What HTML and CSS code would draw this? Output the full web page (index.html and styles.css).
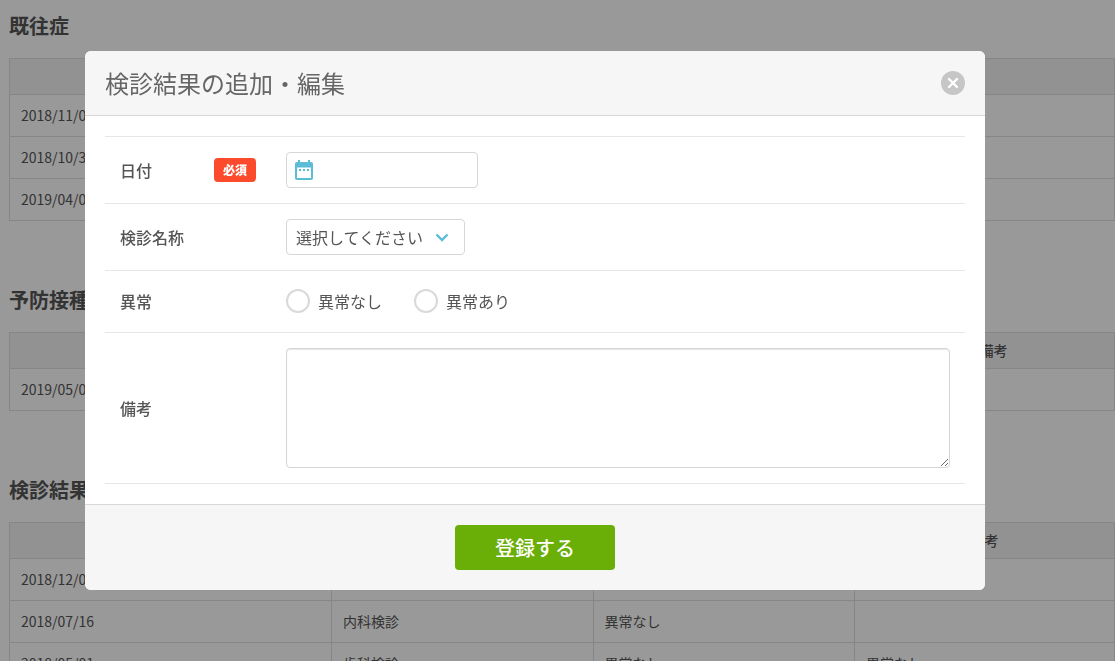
FILE: index.html
```html
<!DOCTYPE html>
<html lang="ja">
<head>
<meta charset="utf-8">
<meta name="viewport" content="width=device-width, initial-scale=1">
<title>検診結果の追加・編集</title>
<link rel="stylesheet" href="styles.css">
</head>
<body>
<main class="page">
  <section class="section">
    <h2 class="section-title">既往症</h2>
    <table class="records">
      <colgroup><col class="col-first"><col></colgroup>
      <thead><tr><th></th><th></th></tr></thead>
      <tbody>
        <tr><td>2018/11/0</td><td></td></tr>
        <tr><td>2018/10/3</td><td></td></tr>
        <tr><td>2019/04/0</td><td></td></tr>
      </tbody>
    </table>
  </section>
  <section class="section">
    <h2 class="section-title">予防接種</h2>
    <table class="records">
      <colgroup><col><col class="col-note"></colgroup>
      <thead><tr><th></th><th>備考</th></tr></thead>
      <tbody>
        <tr><td>2019/05/0</td><td></td></tr>
      </tbody>
    </table>
  </section>
  <section class="section">
    <h2 class="section-title">検診結果</h2>
    <table class="records">
      <colgroup><col class="col-first"><col><col><col class="col-last"></colgroup>
      <thead><tr><th></th><th></th><th></th><th>備考</th></tr></thead>
      <tbody>
        <tr><td>2018/12/0</td><td></td><td></td><td></td></tr>
        <tr><td>2018/07/16</td><td>内科検診</td><td>異常なし</td><td></td></tr>
        <tr><td>2018/05/01</td><td>歯科検診</td><td>異常なし</td><td>異常なし</td></tr>
      </tbody>
    </table>
  </section>
</main>

<div class="overlay">
  <div class="modal" role="dialog" aria-modal="true" aria-labelledby="modal-title">
    <header class="modal-header">
      <h1 class="modal-title" id="modal-title">検診結果の追加・編集</h1>
      <button class="close" type="button" aria-label="閉じる">
        <svg viewBox="0 0 24 24" width="24" height="24" aria-hidden="true"><circle cx="12" cy="12" r="12" fill="#c6c6c6"/><path d="M8 8l8 8M16 8l-8 8" stroke="#fff" stroke-width="2.4" stroke-linecap="round"/></svg>
      </button>
    </header>
    <form id="checkup-form" class="modal-body">
      <div class="row">
        <div class="row-head"><label for="date">日付</label><span class="badge">必須</span></div>
        <div class="date-box">
          <svg class="calendar" viewBox="0 0 18 20" width="18" height="20" aria-hidden="true"><path fill="#5bbcd6" fill-rule="evenodd" d="M3 0h2v2h8V0h2v2h1a2 2 0 0 1 2 2v14a2 2 0 0 1-2 2H2a2 2 0 0 1-2-2V4a2 2 0 0 1 2-2h1zM2 7.500v10.500h14V7.500z"/><path fill="#5bbcd6" d="M4 9h2v2H4zM8 9h2v2H8zM12 9h2v2h-2z"/></svg>
          <input class="date-input" id="date" type="text">
        </div>
      </div>
      <div class="row">
        <div class="row-head"><label for="name">検診名称</label></div>
        <div class="select-box">
          <select class="select" id="name"><option>選択してください</option></select>
          <svg class="chevron" viewBox="0 0 14 9" width="14" height="9" aria-hidden="true"><path d="M1.500 1.500L7 7l5.500-5.500" fill="none" stroke="#5bbcd6" stroke-width="2.400"/></svg>
        </div>
      </div>
      <div class="row row-radio">
        <div class="row-head" id="abnormal">異常</div>
        <div class="radios" role="radiogroup" aria-labelledby="abnormal">
          <label class="radio-label"><input class="radio" type="radio" name="abnormal">異常なし</label>
          <label class="radio-label"><input class="radio" type="radio" name="abnormal">異常あり</label>
        </div>
      </div>
      <div class="row">
        <div class="row-head"><label for="note">備考</label></div>
        <textarea class="textarea" id="note"></textarea>
      </div>
    </form>
    <footer class="modal-footer">
      <button class="submit" type="submit" form="checkup-form">登録する</button>
    </footer>
  </div>
</div>
</body>
</html>
```

FILE: styles.css
```css
* {
  box-sizing: border-box;
}

body {
  margin: 0;
  height: 100vh;
  overflow: hidden;
  background: #fff;
  color: #555;
  font-family: "Noto Sans CJK JP", sans-serif;
  font-size: 16px;
}

button,
input,
select,
textarea {
  font: inherit;
  color: inherit;
}

.page {
  padding: 11px 0 0 9px;
}

.section {
  margin-bottom: 64px;
}

.section-title {
  margin: 0 0 17px;
  font-size: 20px;
  line-height: 30px;
  font-weight: 700;
}

.records {
  width: 100%;
  table-layout: fixed;
  border-collapse: collapse;
  font-size: 14px;
  line-height: 21px;
}

.col-first {
  width: 322px;
}

.col-note {
  width: 242px;
}

.col-last {
  width: 260px;
}

.records th,
.records td {
  height: 42px;
  padding: 0 11px;
  border: 1px solid #e0e0e0;
  text-align: left;
}

.records th {
  height: 36px;
  background: #f3f3f3;
  text-align: center;
  font-weight: 500;
}

.section:not(:last-child) .records th + th,
.section:not(:last-child) .records td + td {
  border-left: 0;
}

.overlay {
  position: fixed;
  inset: 0;
  padding: 51px 130px 0 85px;
  background: rgba(0, 0, 0, 0.4);
}

.modal {
  max-width: 900px;
  overflow: hidden;
  border-radius: 6px;
  background: #fff;
}

.modal-header {
  display: flex;
  align-items: center;
  justify-content: space-between;
  padding: 14px 20px;
  border-bottom: 1px solid #d8d8d8;
  background: #f6f6f6;
}

.modal-title {
  margin: 0;
  color: #666;
  font-size: 24px;
  line-height: 36px;
  font-weight: 400;
}

.close {
  display: block;
  padding: 0;
  border: 0;
  background: none;
  line-height: 0;
}

.modal-body {
  padding: 20px;
}

.row {
  display: grid;
  grid-template-columns: 136px 1fr;
  column-gap: 30px;
  align-items: center;
  padding: 15px;
  border-top: 1px solid #e6e6e6;
}

.row:last-child {
  border-bottom: 1px solid #e6e6e6;
}

.row-radio {
  min-height: 62px;
  padding-bottom: 17px;
}

.row-head {
  display: flex;
  align-items: center;
  justify-content: space-between;
  line-height: 24px;
  font-weight: 500;
}

.badge {
  padding: 0 9px;
  border-radius: 4px;
  background: #fb4a2c;
  color: #fff;
  font-size: 12px;
  font-weight: 900;
}

.date-box,
.select-box {
  display: grid;
  align-items: center;
  justify-self: start;
}

.date-box > *,
.select-box > * {
  grid-area: 1 / 1;
}

.date-input,
.select,
.textarea {
  height: 36px;
  border: 1px solid #d6d6d6;
  border-radius: 4px;
  background: #fff;
}

.date-input {
  width: 192px;
  padding: 0 8px 0 36px;
}

.calendar {
  z-index: 1;
  margin-left: 9px;
}

.select {
  width: 179px;
  padding: 0 9px;
  appearance: none;
}

.chevron {
  z-index: 1;
  justify-self: end;
  margin-right: 16px;
  pointer-events: none;
}

.radios {
  display: flex;
  gap: 32px;
}

.radio-label {
  display: flex;
  align-items: center;
  gap: 8px;
  line-height: 24px;
}

.radio {
  width: 24px;
  height: 24px;
  margin: 0;
  appearance: none;
  border: 2px solid #d9d9d9;
  border-radius: 50%;
  background: #fff;
}

.radio:checked {
  border-width: 7px;
  border-color: #5bbcd6;
}

.textarea {
  display: block;
  width: 100%;
  height: 120px;
  padding: 8px;
  box-shadow: inset 0 1px 1px #e6e6e6;
  resize: vertical;
}

.modal-footer {
  display: flex;
  justify-content: center;
  padding: 20px;
  border-top: 1px solid #d8d8d8;
  background: #f6f6f6;
}

.submit {
  min-width: 160px;
  height: 45px;
  padding: 0 20px;
  border: 0;
  border-radius: 4px;
  background: #6aae08;
  color: #fff;
  font-size: 20px;
  font-weight: 500;
}
```
